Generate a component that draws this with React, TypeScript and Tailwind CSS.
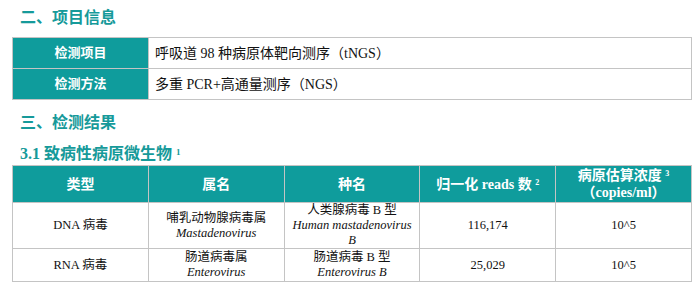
import React from 'react';

const font = { fontFamily: '"Liberation Serif", "Noto Sans CJK SC", serif' };

const rows = [
  {
    type: 'DNA 病毒',
    genus: '哺乳动物腺病毒属',
    genusLatin: 'Mastadenovirus',
    species: '人类腺病毒 B 型',
    speciesLatin: ['Human mastadenovirus', 'B'],
    reads: '116,174',
    conc: '10^5',
    h: 'h-[46px]',
  },
  {
    type: 'RNA 病毒',
    genus: '肠道病毒属',
    genusLatin: 'Enterovirus',
    species: '肠道病毒 B 型',
    speciesLatin: ['Enterovirus B'],
    reads: '25,029',
    conc: '10^5',
    h: 'h-[33px]',
  },
];

export default function App() {
  return (
    <div className="w-[699px] h-[293px] bg-white overflow-hidden text-[#111]" style={font}>
      <h2 className="pl-[20px] pt-[7px] text-[16px] leading-[22px] font-bold text-[#169a9a]">二、项目信息</h2>

      <table className="ml-[12px] mt-[8px] w-[680px] border-collapse text-[14px]">
        <tbody>
          <tr className="h-[31px]">
            <td className="w-[136px] border border-[#c4c4c4] bg-[#0f9c9c] text-center font-bold text-white text-[13px]">检测项目</td>
            <td className="border border-[#c4c4c4] pl-[6px]">呼吸道 98 种病原体靶向测序（tNGS）</td>
          </tr>
          <tr className="h-[31px]">
            <td className="border border-[#c4c4c4] bg-[#0f9c9c] text-center font-bold text-white text-[13px]">检测方法</td>
            <td className="border border-[#c4c4c4] pl-[6px]">多重 PCR+高通量测序（NGS）</td>
          </tr>
        </tbody>
      </table>

      <h2 className="pl-[20px] mt-[12px] text-[16px] leading-[22px] font-bold text-[#169a9a]">三、检测结果</h2>
      <h3 className="pl-[20px] mt-[10px] text-[16px] leading-[20px] font-bold text-[#169a9a]">
        3.1 致病性病原微生物 <sup className="text-[9px]">1</sup>
      </h3>

      <table className="ml-[12px] mt-[1px] w-[680px] table-fixed border-collapse text-[12.5px] leading-[15px]">
        <thead>
          <tr className="h-[37px] bg-[#0f9c9c] text-white font-bold text-[14px] leading-[17px]">
            <th className="border border-[#c4c4c4]">类型</th>
            <th className="border border-[#c4c4c4]">属名</th>
            <th className="border border-[#c4c4c4]">种名</th>
            <th className="border border-[#c4c4c4]">
              归一化 reads 数 <sup className="text-[8px]">2</sup>
            </th>
            <th className="border border-[#c4c4c4]">
              病原估算浓度 <sup className="text-[8px]">3</sup>
              <br />
              （copies/ml）
            </th>
          </tr>
        </thead>
        <tbody>
          {rows.map((r) => (
            <tr key={r.type} className={r.h + ' text-center'}>
              <td className="border border-[#c4c4c4]">{r.type}</td>
              <td className="border border-[#c4c4c4]">
                <div>{r.genus}</div>
                <div className="italic">{r.genusLatin}</div>
              </td>
              <td className="border border-[#c4c4c4]">
                <div>{r.species}</div>
                {r.speciesLatin.map((s) => (
                  <div key={s} className="italic">{s}</div>
                ))}
              </td>
              <td className="border border-[#c4c4c4]">{r.reads}</td>
              <td className="border border-[#c4c4c4]">{r.conc}</td>
            </tr>
          ))}
        </tbody>
      </table>
    </div>
  );
}
